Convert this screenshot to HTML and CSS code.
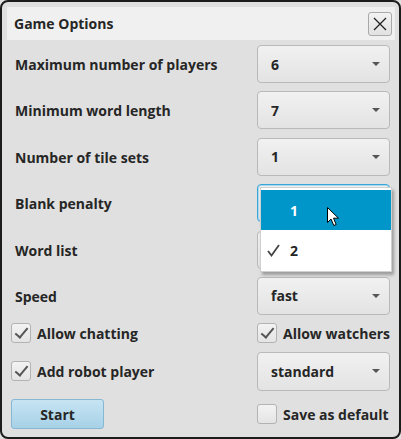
FILE: index.html
```html
<!DOCTYPE html>
<html>
<head>
<meta charset="utf-8">
<link rel="stylesheet" href="styles.css">
</head>
<body>
<div class="window">
  <div class="titlebar">
    <span class="title">Game Options</span>
    <button class="close" aria-label="Close">
      <svg width="14" height="14" viewBox="0 0 14 14"><path d="M1 1 L13 13 M13 1 L1 13" stroke="#222" stroke-width="1.3" fill="none"/></svg>
    </button>
  </div>
  <div class="grid">
    <div class="label">Maximum number of players</div>
    <div class="combo"><span>6</span><i class="arrow"></i></div>

    <div class="label">Minimum word length</div>
    <div class="combo"><span>7</span><i class="arrow"></i></div>

    <div class="label">Number of tile sets</div>
    <div class="combo"><span>1</span><i class="arrow"></i></div>

    <div class="label">Blank penalty</div>
    <div class="combo focused">
      <span>2</span><i class="arrow"></i>
      <div class="popup">
        <div class="item selected"><span class="mark"></span><span>1</span></div>
        <div class="item"><span class="mark"><svg width="13" height="13" viewBox="0 0 13 13"><path d="M1 7 L4.5 11.5 L12 1" stroke="#444" stroke-width="1.8" fill="none"/></svg></span><span>2</span></div>
        <svg class="cursor" width="13" height="20" viewBox="0 0 13 20"><path d="M0.5 0.5 L0.5 15.5 L4 12 L6.8 18.5 L9.2 17.5 L6.5 11.2 L11.5 11.2 Z" fill="#fff" stroke="#000" stroke-width="1"/></svg>
      </div>
    </div>

    <div class="label">Word list</div>
    <div class="combo"><span>2</span><i class="arrow"></i></div>

    <div class="label">Speed</div>
    <div class="combo"><span>fast</span><i class="arrow"></i></div>

    <label class="check"><span class="box checked"></span>Allow chatting</label>
    <label class="check"><span class="box checked"></span>Allow watchers</label>

    <label class="check"><span class="box checked"></span>Add robot player</label>
    <div class="combo"><span>standard</span><i class="arrow"></i></div>

    <div class="startcell"><button class="start">Start</button></div>
    <label class="check"><span class="box"></span>Save as default</label>
  </div>
</div>
</body>
</html>
```
FILE: styles.css
```css
html, body {
  margin: 0;
  padding: 0;
  background: #e0e0e0;
}
body {
  width: 401px;
  height: 439px;
  overflow: hidden;
  font-family: "Open Sans", "Liberation Sans", sans-serif;
  font-weight: 700;
  color: #262626;
}
.window {
  box-sizing: border-box;
  width: 401px;
  height: 439px;
  border: 2px solid #1c1c1c;
  border-radius: 8px;
  background: #e0e0e0;
  padding: 5px 4px 0 5px;
}
.titlebar {
  height: 33px;
  background: #f0f0f0;
  display: flex;
  align-items: center;
  justify-content: space-between;
  padding: 0 3px 0 7px;
}
.title {
  font-size: 14px;
}
.close {
  width: 24px;
  height: 24px;
  padding: 0;
  border: 1px solid #a9a9a9;
  border-radius: 3px;
  background: linear-gradient(#f2f2f2, #e2e2e2);
  display: flex;
  align-items: center;
  justify-content: center;
}
.grid {
  display: grid;
  grid-template-columns: 1fr 133px;
  grid-template-rows: repeat(6, 38px) 20px 39px 30px;
  row-gap: 8.4px;
  padding: 5px 5px 0 4px;
  font-size: 14px;
}
.label {
  align-self: center;
  padding-left: 4px;
  padding-top: 1px;
}
.combo {
  position: relative;
  box-sizing: border-box;
  border: 1px solid #b9b9b9;
  border-radius: 4px;
  background: linear-gradient(#f1f1f1, #e3e3e3);
  display: flex;
  align-items: center;
  justify-content: space-between;
  padding: 0 9px 0 13px;
}
.combo.focused {
  border: 1px solid #3ba7d6;
  box-shadow: 0 0 0 1px #a9d8ee inset;
}
.arrow {
  width: 0;
  height: 0;
  border-left: 4px solid transparent;
  border-right: 4px solid transparent;
  border-top: 4px solid #555;
}
.popup {
  position: absolute;
  left: 2px;
  top: 2px;
  width: 132px;
  height: 85px;
  box-sizing: border-box;
  background: #fff;
  border: 1px solid #d0d0d0;
  padding-top: 2px;
  box-shadow: 2px 3px 3px rgba(0,0,0,0.3);
  z-index: 5;
}
.item {
  height: 40px;
  display: flex;
  align-items: center;
  padding-left: 6px;
  color: #262626;
}
.item.selected {
  background: #0096c9;
  color: #fff;
}
.mark {
  width: 23px;
  display: flex;
  align-items: center;
}
.cursor {
  position: absolute;
  left: 66px;
  top: 19px;
}
.check {
  display: flex;
  align-items: center;
  gap: 6px;
  white-space: nowrap;
}
.box {
  box-sizing: border-box;
  width: 20px;
  height: 20px;
  border: 1px solid #b3b3b3;
  border-radius: 3px;
  background: linear-gradient(#f3f3f3, #e4e4e4);
  flex: none;
  position: relative;
}
.box.checked::after {
  content: "";
  position: absolute;
  left: 6px;
  top: 1px;
  width: 5px;
  height: 11px;
  border-right: 2px solid #555;
  border-bottom: 2px solid #555;
  transform: rotate(40deg);
}
.startcell {
  display: flex;
}
.start {
  width: 93px;
  height: 30px;
  box-sizing: border-box;
  border: 1px solid #86b7d3;
  border-radius: 3px;
  background: linear-gradient(#c6e4f3, #a7d1e7);
  font-family: inherit;
  font-weight: 700;
  font-size: 14px;
  color: #262626;
  padding: 0;
}
```
